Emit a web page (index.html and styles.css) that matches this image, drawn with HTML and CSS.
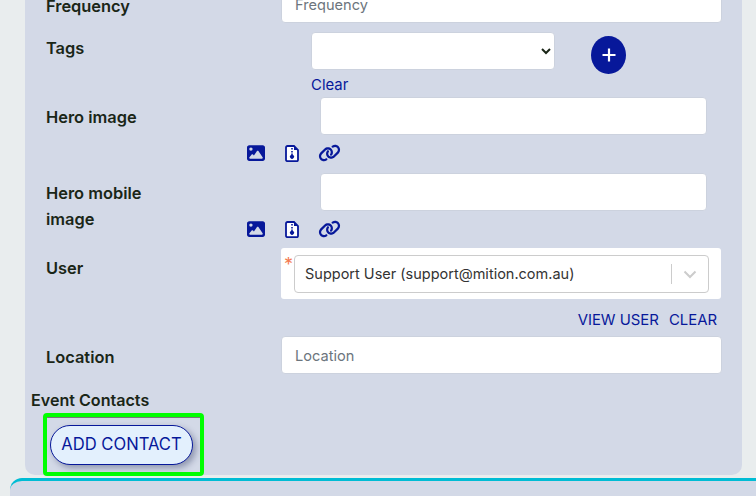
FILE: index.html
```html
<!DOCTYPE html>
<html lang="en">
<head>
<meta charset="utf-8">
<title>Event form</title>
<link rel="stylesheet" href="styles.css">
</head>
<body>
<main class="panel">
  <div class="row row-frequency">
    <label class="label label-frequency">Frequency</label>
    <input class="input" type="text" placeholder="Frequency">
  </div>

  <div class="row row-tags">
    <label class="label label-tags">Tags</label>
    <div class="tags-control">
      <div class="tags-line">
        <select class="select"><option></option></select>
        <button class="add-round" type="button" aria-label="Add tag">
          <svg class="plus" viewBox="0 0 16 16"><path d="M8 1.500v13M1.500 8h13"/></svg>
        </button>
      </div>
      <a class="link clear-link">Clear</a>
    </div>
  </div>

  <div class="row-media row-hero">
    <label class="label">Hero image</label>
    <input class="input input-media" type="text">
    <div class="icons">
      <svg class="icon icon-image" viewBox="0 32 512 448"><path d="M0 96C0 60.7 28.7 32 64 32H448c35.3 0 64 28.7 64 64V416c0 35.3-28.7 64-64 64H64c-35.3 0-64-28.7-64-64V96zM323.8 202.5c-4.5-6.6-11.9-10.5-19.8-10.5s-15.4 3.9-19.8 10.5l-87 127.6L170.7 297c-4.6-5.7-11.5-9-18.7-9s-14.2 3.3-18.7 9l-64 80c-5.8 7.2-6.9 17.1-2.9 25.4s12.4 13.6 21.6 13.6h96 32H424c8.9 0 17.1-4.9 21.2-12.8s3.6-17.4-1.4-24.7l-120-176zM112 192a48 48 0 1 0 0-96 48 48 0 1 0 0 96z"/></svg>
      <svg class="icon icon-file" viewBox="0 0 14 17"><path class="outline" d="M2.500 1h6.500L13 5v10a1.200 1.200 0 0 1-1.200 1.200H2.500A1.500 1.500 0 0 1 1 14.700V2.500A1.500 1.500 0 0 1 2.500 1z"/><path d="M9 1l4 4H9zM6.200 3h1.600v1.600H6.200zM6.200 6h1.600v1.600H6.200zM6.200 8.500h1.600v1.500a2 2 0 1 1-1.600 0z"/></svg>
      <svg class="icon icon-link" viewBox="0 0 640 512"><path d="M579.800 267.700c56.500-56.500 56.500-148 0-204.500c-50-50-128.800-56.500-186.300-15.400l-1.600 1.100c-14.400 10.300-17.700 30.300-7.400 44.600s30.300 17.700 44.600 7.400l1.600-1.100c32.100-22.900 76-19.300 103.800 8.600c31.500 31.500 31.500 82.500 0 114L422.300 334.800c-31.500 31.500-82.500 31.500-114 0c-27.900-27.900-31.500-71.800-8.600-103.800l1.100-1.600c10.300-14.400 6.900-34.400-7.400-44.600s-34.400-6.900-44.600 7.400l-1.100 1.600C206.500 251.200 213 330 263 380c56.500 56.500 148 56.500 204.500 0L579.800 267.700zM60.200 244.300c-56.500 56.500-56.500 148 0 204.500c50 50 128.800 56.500 186.300 15.400l1.600-1.100c14.400-10.300 17.700-30.300 7.400-44.600s-30.300-17.700-44.600-7.400l-1.600 1.100c-32.100 22.900-76 19.300-103.800-8.600C74 372 74 321 105.500 289.500L217.700 177.200c31.500-31.500 82.500-31.500 114 0c27.900 27.900 31.500 71.800 8.600 103.900l-1.100 1.600c-10.300 14.400-6.900 34.400 7.400 44.600s34.400 6.900 44.600-7.400l1.100-1.600C433.500 260.800 427 182 377 132c-56.500-56.500-148-56.500-204.500 0L60.200 244.300z"/></svg>
    </div>
  </div>

  <div class="row-media row-hero-mobile">
    <label class="label label-wrap">Hero mobile image</label>
    <input class="input input-media" type="text">
    <div class="icons">
      <svg class="icon icon-image" viewBox="0 32 512 448"><path d="M0 96C0 60.7 28.7 32 64 32H448c35.3 0 64 28.7 64 64V416c0 35.3-28.7 64-64 64H64c-35.3 0-64-28.7-64-64V96zM323.8 202.5c-4.5-6.6-11.9-10.5-19.8-10.5s-15.4 3.9-19.8 10.5l-87 127.6L170.7 297c-4.6-5.7-11.5-9-18.7-9s-14.2 3.3-18.7 9l-64 80c-5.8 7.2-6.9 17.1-2.9 25.4s12.4 13.6 21.6 13.6h96 32H424c8.9 0 17.1-4.9 21.2-12.8s3.6-17.4-1.4-24.7l-120-176zM112 192a48 48 0 1 0 0-96 48 48 0 1 0 0 96z"/></svg>
      <svg class="icon icon-file" viewBox="0 0 14 17"><path class="outline" d="M2.500 1h6.500L13 5v10a1.200 1.200 0 0 1-1.200 1.200H2.500A1.500 1.500 0 0 1 1 14.700V2.500A1.500 1.500 0 0 1 2.500 1z"/><path d="M9 1l4 4H9zM6.200 3h1.600v1.600H6.200zM6.200 6h1.600v1.600H6.200zM6.200 8.500h1.600v1.500a2 2 0 1 1-1.600 0z"/></svg>
      <svg class="icon icon-link" viewBox="0 0 640 512"><path d="M579.800 267.700c56.500-56.500 56.500-148 0-204.500c-50-50-128.800-56.500-186.300-15.400l-1.600 1.100c-14.400 10.300-17.700 30.300-7.400 44.600s30.300 17.700 44.600 7.400l1.600-1.100c32.100-22.900 76-19.300 103.800 8.600c31.500 31.500 31.500 82.500 0 114L422.300 334.800c-31.500 31.500-82.500 31.500-114 0c-27.900-27.900-31.500-71.800-8.600-103.800l1.100-1.600c10.300-14.400 6.900-34.400-7.400-44.600s-34.400-6.900-44.600 7.400l-1.100 1.600C206.500 251.200 213 330 263 380c56.500 56.500 148 56.500 204.500 0L579.800 267.700zM60.200 244.300c-56.500 56.500-56.500 148 0 204.500c50 50 128.800 56.500 186.300 15.400l1.600-1.100c14.400-10.300 17.700-30.300 7.400-44.600s-30.300-17.700-44.600-7.400l-1.600 1.100c-32.100 22.900-76 19.300-103.800-8.600C74 372 74 321 105.500 289.500L217.700 177.200c31.500-31.500 82.500-31.500 114 0c27.900 27.900 31.500 71.800 8.600 103.900l-1.100 1.600c-10.300 14.400-6.900 34.400 7.400 44.600s34.400 6.900 44.600-7.400l1.100-1.600C433.500 260.800 427 182 377 132c-56.500-56.500-148-56.500-204.500 0L60.200 244.300z"/></svg>
    </div>
  </div>

  <div class="row row-user">
    <label class="label label-user">User</label>
    <div class="user-control">
      <div class="user-box">
        <span class="required">*</span>
        <div class="combo">
          <span class="combo-value">Support User (support@mition.com.au)</span>
          <span class="combo-sep"></span>
          <svg class="combo-arrow" viewBox="0 0 20 20"><path d="M4.500 7.500 10 13l5.500-5.500"/></svg>
        </div>
      </div>
      <div class="user-actions">
        <a class="link">VIEW USER</a>
        <a class="link">CLEAR</a>
      </div>
    </div>
  </div>

  <div class="row row-location">
    <label class="label label-location">Location</label>
    <input class="input" type="text" placeholder="Location">
  </div>

  <h2 class="section-title">Event Contacts</h2>
  <div class="highlight">
    <button class="add-contact" type="button">ADD CONTACT</button>
  </div>
</main>
<section class="next-panel"></section>
</body>
</html>
```
FILE: styles.css
```css
* { box-sizing: border-box; }

html, body {
  margin: 0;
  height: 496px;
  overflow: hidden;
}

body {
  background: #e9edee;
  color: #1a2617;
  font-family: Inter, "Liberation Sans", sans-serif;
  font-size: 14.6px;
}

.panel {
  width: 717px;
  height: 490px;
  margin: -15px 0 0 25px;
  padding: 1px 20px 0 6px;
  background: #d3d9e7;
  border-radius: 0 0 10px 10px;
}

.row {
  display: grid;
  grid-template-columns: 235px 441px;
  margin-left: 15px;
}

.row-media {
  display: grid;
  grid-template-columns: 201px 475px;
  grid-template-rows: 36px 16px;
  row-gap: 11px;
  margin-left: 15px;
}

.row-hero-mobile { margin-top: 13px; }
.row-user { margin-top: 11px; }
.row-tags { margin-top: 11px; }
.row-location { margin-top: 10px; }

.label {
  font-weight: 600;
  font-size: 16.4px;
  line-height: 26px;
  padding-top: 6px;
}

.label-frequency { padding-top: 7px; }
.label-tags { padding-top: 2px; }
.label-user { padding-top: 7px; }
.label-location { padding-top: 7px; }
.label-wrap { width: 120px; }
.row-media .label { grid-row: 1 / span 2; }

.input {
  width: 100%;
  height: 38px;
  margin: -1px 0;
  padding: 2px 13px 0;
  background: #fff;
  border: 1px solid #ccd2de;
  border-radius: 4px;
  font: inherit;
  color: inherit;
}

.input::placeholder { color: #6c757d; opacity: 1; }

.input-media {
  width: 387px;
  margin-left: 73px;
}

.tags-control { padding-left: 30px; }

.tags-line {
  display: flex;
  align-items: flex-start;
  gap: 36px;
}

.select {
  width: 244px;
  height: 38px;
  margin: -1px 0;
  background: #fff;
  border: 1px solid #ccd2de;
  border-radius: 4px;
  font: inherit;
  color: inherit;
}

.add-round {
  display: flex;
  align-items: center;
  justify-content: center;
  width: 35px;
  height: 38px;
  margin-top: 3px;
  padding: 0;
  background: #07189a;
  border: 0;
  border-radius: 50%;
}

.plus { width: 16px; height: 16px; }

.plus path {
  fill: none;
  stroke: #fff;
  stroke-width: 2.2;
}

.link {
  color: #07189a;
  font-size: 14.9px;
  line-height: 20px;
}

.clear-link {
  display: block;
  height: 24px;
  padding-top: 1px;
}

.icons {
  grid-column: 2;
  display: flex;
  align-items: center;
}

.icon { display: block; fill: #07189a; }
.icon-image { width: 18px; height: 16px; margin-right: 20px; }
.icon-file { width: 14px; height: 17px; margin-right: 19px; }
.icon-link { width: 23px; height: 18px; }

.outline {
  fill: #fff;
  stroke: #07189a;
  stroke-width: 1.8;
}

.user-box {
  position: relative;
  height: 51px;
  margin-right: 1px;
  padding: 7px 12px 6px 13px;
  background: #fff;
  border-radius: 3px;
}

.required {
  position: absolute;
  left: 3px;
  top: 7px;
  color: #f47a50;
  font-size: 18px;
  line-height: 20px;
}

.combo {
  display: flex;
  align-items: center;
  height: 38px;
  padding: 0 0 1px 10px;
  background: #fff;
  border: 1px solid #ccc;
  border-radius: 4px;
}

.combo-value {
  flex: 1;
  color: #333;
  font-size: 14.5px;
}

.combo-sep {
  width: 1px;
  height: 20px;
  background: #ccc;
}

.combo-arrow {
  width: 36px;
  height: 20px;
}

.combo-arrow path {
  fill: none;
  stroke: #ccc;
  stroke-width: 2;
}

.user-actions {
  display: flex;
  justify-content: flex-end;
  gap: 10px;
  height: 28px;
  padding: 11px 5px 0 0;
}

.section-title {
  margin: 14px 0 0;
  font-size: 16.1px;
  font-weight: 600;
  line-height: 26px;
}

.highlight {
  width: 161px;
  height: 63px;
  margin: 0 0 0 12px;
  padding: 8px 0 0 3px;
  border: 4px solid #0f0;
  border-radius: 4px;
  box-shadow: inset 0 1px 0 #777;
}

.add-contact {
  display: block;
  width: 143px;
  height: 40px;
  padding: 0 0 2px;
  background: #e3f0fd;
  border: 1px solid #07189a;
  border-radius: 20px;
  box-shadow: 3px 3px 6px rgba(40, 50, 90, 0.4);
  color: #07189a;
  font-family: inherit;
  font-size: 16.6px;
  font-weight: 400;
}

.next-panel {
  width: 760px;
  height: 60px;
  margin: 3px 0 0 10px;
  background: #d3d9e7;
  border-top: 3px solid #00bcd4;
  border-radius: 12px 0 0 0;
}
```
